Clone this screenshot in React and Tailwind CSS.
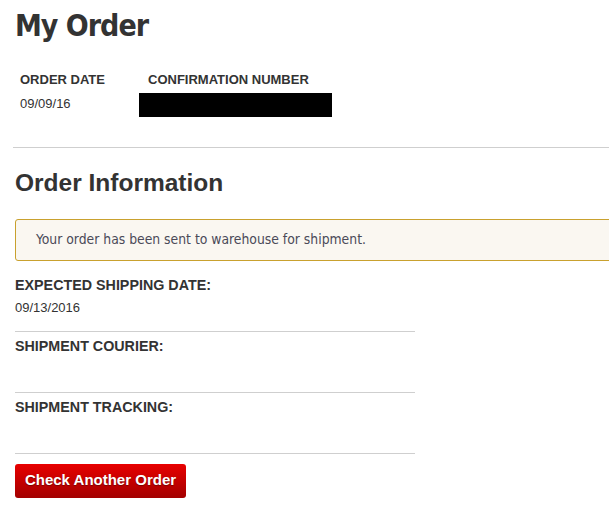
import React from 'react';

const label = "font-['Liberation_Sans',Arial,sans-serif] font-bold text-[#333] uppercase";

function Field({ title, value }) {
  return (
    <div className="border-b border-[#cfcfcf] h-[61px] pt-[4px]">
      <div className={`${label} text-[14.3px] leading-[20px]`}>{title}</div>
      {value && (
        <div className="font-['Liberation_Sans',Arial,sans-serif] text-[13px] leading-[20px] text-[#333] mt-[3px]">{value}</div>
      )}
    </div>
  );
}

export default function App() {
  return (
    <div className="w-[609px] h-[508px] bg-white overflow-hidden pl-[15px]">
      {/* Header */}
      <h1 className="font-['DejaVu_Sans_Condensed','DejaVu_Sans',sans-serif] font-bold text-[30px] tracking-[-1px] leading-none text-[#333] pt-[11px]">
        My Order
      </h1>

      <div className="flex pl-[5px] mt-[31px]">
        <div className="w-[128px]">
          <div className={`${label} text-[13px] leading-[16px]`}>Order Date</div>
          <div className="font-['Liberation_Sans',Arial,sans-serif] text-[13px] text-[#333] leading-[16px] mt-[8px]">09/09/16</div>
        </div>
        <div>
          <div className={`${label} text-[13px] leading-[16px]`}>Confirmation Number</div>
          <div className="w-[193px] h-[24px] bg-black -ml-[9px] mt-[5px]" />
        </div>
      </div>

      <div className="border-t border-[#cfcfcf] mt-[30px] -ml-[2px]" />

      {/* Order information */}
      <h2 className="font-['Liberation_Sans',Arial,sans-serif] font-bold text-[24.5px] leading-none text-[#333] mt-[23px]">
        Order Information
      </h2>

      <div className="mt-[23px] h-[42px] w-[620px] border border-[#c9a12e] rounded-[3px] bg-[#faf7f1] flex items-center pl-[20px]">
        <span className="font-['DejaVu_Sans_Condensed','DejaVu_Sans',sans-serif] text-[13.8px] text-[#4a4a58] font-light">
          Your order has been sent to warehouse for shipment.
        </span>
      </div>

      <div className="w-[400px] mt-[10px]">
        <Field title="Expected Shipping Date:" value="09/13/2016" />
        <Field title="Shipment Courier:" />
        <Field title="Shipment Tracking:" />
      </div>

      <button
        type="button"
        className="mt-[10px] h-[34px] w-[171px] rounded-[3px] bg-gradient-to-b from-[#e80000] to-[#a30000] text-white font-['Liberation_Sans',Arial,sans-serif] font-bold text-[15px] [text-shadow:0_1px_1px_rgba(0,0,0,0.35)]"
      >
        Check Another Order
      </button>
    </div>
  );
}
